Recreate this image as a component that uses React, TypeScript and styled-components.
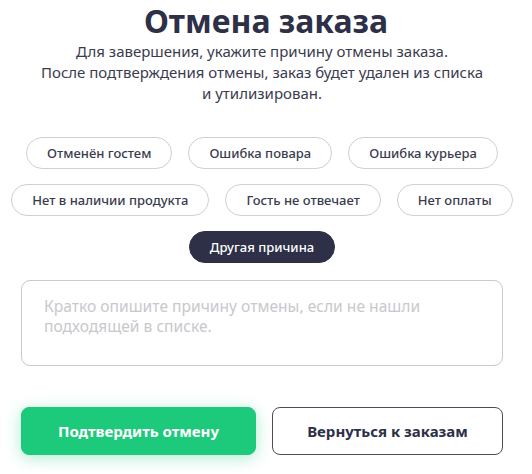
import React, { useState } from 'react';
import styled, { createGlobalStyle } from 'styled-components';

const GlobalStyle = createGlobalStyle`
  body {
    margin: 0;
    background: #ffffff;
    font-family: "Noto Sans", "Open Sans", sans-serif;
  }
`;

const Page = styled.div`
  width: 532px;
  height: 474px;
  box-sizing: border-box;
  padding: 0 29px 0 21px;
  display: flex;
  flex-direction: column;
  align-items: center;
  color: #2d3047;
`;

const Title = styled.h1`
  margin: 0 0 0 8px;
  padding-top: 1px;
  font-size: 32px;
  line-height: 40px;
  font-weight: 700;
  color: #2d3047;
`;

const Subtitle = styled.p`
  margin: 0;
  font-size: 15px;
  line-height: 21px;
  text-align: center;
  color: #3a3c4e;
`;

const Chips = styled.div`
  margin: 33px -21px 0;
  align-self: stretch;
  display: flex;
  flex-wrap: wrap;
  justify-content: center;
  column-gap: 16px;
  row-gap: 15px;
`;

const Chip = styled.button<{ $active?: boolean }>`
  height: 32px;
  padding: 0 20px;
  border-radius: 16px;
  border: 1px solid ${p => (p.$active ? '#2d3047' : '#d0d0d5')};
  background: ${p => (p.$active ? '#2d3047' : '#ffffff')};
  color: ${p => (p.$active ? '#ffffff' : '#3a3c4e')};
  font-family: inherit;
  font-size: 13px;
  font-weight: 500;
  cursor: pointer;
`;

const TextArea = styled.textarea`
  margin-top: 17px;
  width: 482px;
  height: 86px;
  box-sizing: border-box;
  border: 1px solid #c9c9ce;
  border-radius: 9px;
  padding: 15px 22px;
  resize: none;
  font-family: inherit;
  font-size: 15.6px;
  line-height: 20px;
  color: #2d3047;
  outline: none;

  &::placeholder {
    color: #c8c8cd;
  }
`;

const Actions = styled.div`
  margin-top: 41px;
  width: 482px;
  display: grid;
  grid-template-columns: 235px 1fr;
  gap: 16px;
`;

const Button = styled.button<{ $primary?: boolean }>`
  height: 48px;
  border-radius: 8px;
  font-family: inherit;
  font-size: 15px;
  font-weight: 700;
  cursor: pointer;
  border: 1px solid ${p => (p.$primary ? '#1dc97a' : '#4a4c5c')};
  background: ${p => (p.$primary ? '#1dc97a' : '#ffffff')};
  color: ${p => (p.$primary ? '#ffffff' : '#2d3047')};
  box-shadow: ${p => (p.$primary ? '0 3px 16px rgba(29, 201, 122, 0.35)' : 'none')};
`;

const reasons = [
  'Отменён гостем',
  'Ошибка повара',
  'Ошибка курьера',
  'Нет в наличии продукта',
  'Гость не отвечает',
  'Нет оплаты',
  'Другая причина',
];

const App: React.FC = () => {
  const [selected, setSelected] = useState('Другая причина');

  return (
    <>
      <GlobalStyle />
      <Page>
        <Title>Отмена заказа</Title>
        <Subtitle>
          Для завершения, укажите причину отмены заказа.
          <br />
          После подтверждения отмены, заказ будет удален из списка
          <br />
          и утилизирован.
        </Subtitle>
        <Chips>
          {reasons.map(r => (
            <Chip key={r} $active={r === selected} onClick={() => setSelected(r)}>
              {r}
            </Chip>
          ))}
        </Chips>
        <TextArea
          autoFocus
          placeholder="Кратко опишите причину отмены, если не нашли подходящей в списке."
        />
        <Actions>
          <Button $primary>Подтвердить отмену</Button>
          <Button>Вернуться к заказам</Button>
        </Actions>
      </Page>
    </>
  );
};

export default App;
